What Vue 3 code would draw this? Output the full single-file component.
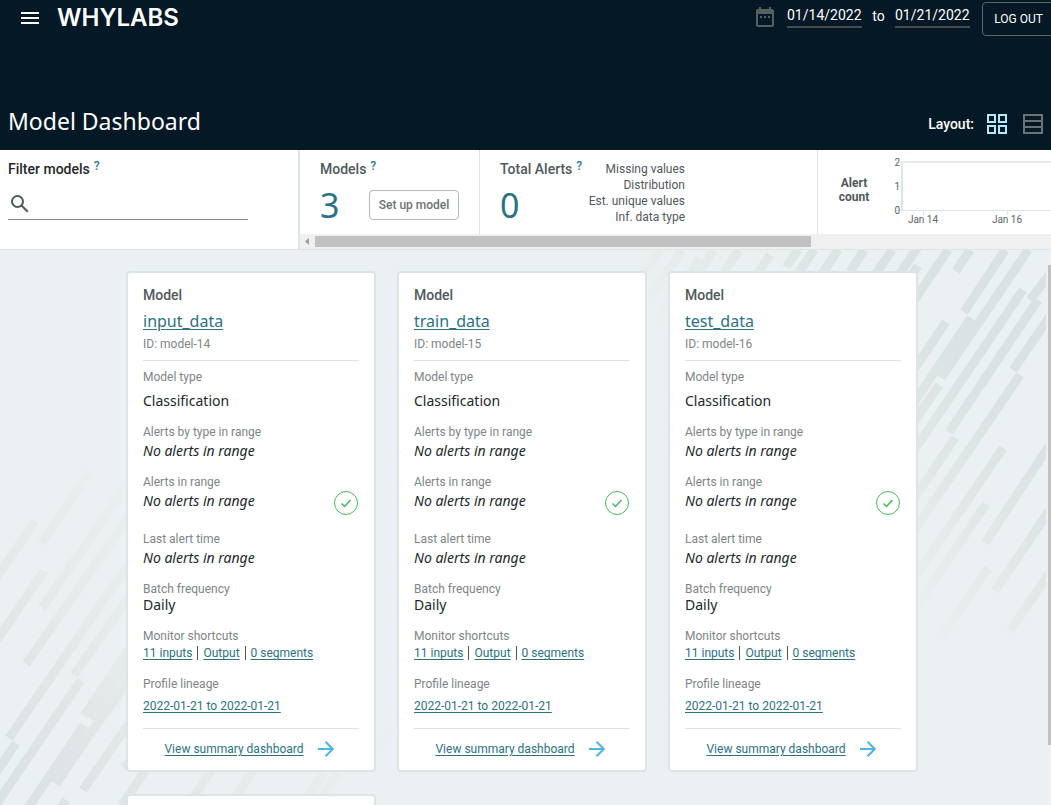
<script setup>
import { ref } from 'vue'

const layout = ref('grid')
const search = ref('')
const startDate = ref('01/14/2022')
const endDate = ref('01/21/2022')

const models = [
  { id: 'model-14', name: 'input_data' },
  { id: 'model-15', name: 'train_data' },
  { id: 'model-16', name: 'test_data' },
]

const alertTypes = ['Missing values', 'Distribution', 'Est. unique values', 'Inf. data type']

// Diagonal background bars: x1 y1 x2 y2 of each centre line.
const bars = [
  [948, 0, 905, 64], [970, 0, 956, 21], [1005, 0, 964, 62], [1028, 0, 941, 128], [971, 68, 900, 173],
  [1023, 40, 860, 280], [1053, 20, 1030, 50], [1038, 50, 949, 182], [1053, 62, 1013, 120],
  [1020, 125, 860, 360], [946, 72, 890, 155], [939, 135, 860, 251], [955, 188, 860, 328],
  [1003, 198, 860, 408], [1053, 190, 985, 293], [986, 254, 880, 410], [1053, 255, 995, 341],
  [988, 318, 940, 389], [1053, 318, 1010, 381],
  [918, 16, 905, 35], [892, 0, 870, 32], [864, 0, 850, 22], [943, -40, 875, 60],
  [838, 0, 810, 41], [814, 0, 790, 35], [798, 0, 786, 17], [770, 5, 740, 50], [739, 0, 640, 145],
  [714, 0, 640, 108], [700, 8, 640, 96], [682, 0, 640, 62], [660, 0, 640, 30],
  [35, 271, -7, 333], [44, 321, -7, 396], [90, 222, 42, 293], [130, 230, 42, 358], [130, 265, 26, 414],
  [130, 312, 9, 488], [130, 345, 74, 425], [81, 430, -5, 556], [16, 493, -7, 527],
  [136, 389, 84, 466], [136, 402, 91, 469], [130, 429, 92, 481], [84, 475, 28, 558], [92, 481, 56, 534],
  [85, 478, 50, 530], [130, 472, 83, 540], [136, 506, 124, 518], [66, 550, 60, 559], [135, 542, 122, 560],
  [149, 515, 122, 555], [215, 515, 188, 555], [257, 515, 230, 555], [324, 523, 303, 555], [338, 523, 317, 555],
  [385, 400, 365, 430], [396, 470, 375, 501],
]
</script>

<template>
  <div class="page">
    <header class="header">
      <div class="topbar">
        <button class="icon-btn menu" type="button" aria-label="Open menu">
          <svg width="18" height="12" viewBox="0 0 18 12"><path d="M0 1h18M0 6h18M0 11h18" stroke="#fff" stroke-width="2" /></svg>
        </button>
        <a class="logo" href="#">WHYLABS</a>
        <div class="dates">
          <svg class="calendar" width="18" height="20" viewBox="0 0 18 20">
            <path fill="#55605f" fill-rule="evenodd" d="M3 0h2v2h8V0h2v2h1a2 2 0 0 1 2 2v14a2 2 0 0 1-2 2H2a2 2 0 0 1-2-2V4a2 2 0 0 1 2-2h1zM2 7v11h14V7zM4 9h2v2H4zm4 0h2v2H8zm4 0h2v2h-2z" />
          </svg>
          <input v-model="startDate" class="date" type="text" aria-label="Start date" />
          <span class="to">to</span>
          <input v-model="endDate" class="date" type="text" aria-label="End date" />
        </div>
        <button class="logout" type="button">LOG OUT</button>
      </div>
      <div class="titlebar">
        <h1>Model Dashboard</h1>
        <div class="layout">
          <span class="layout-label">Layout:</span>
          <button class="icon-btn" :class="{ on: layout === 'grid' }" type="button" aria-label="Card layout" @click="layout = 'grid'">
            <svg width="20" height="20" viewBox="0 0 20 20" fill="none" stroke="currentColor" stroke-width="2">
              <path d="M1 1h7v7H1zM12 1h7v7h-7zM1 12h7v7H1zM12 12h7v7h-7z" />
            </svg>
          </button>
          <button class="icon-btn" :class="{ on: layout === 'list' }" type="button" aria-label="Table layout" @click="layout = 'list'">
            <svg width="20" height="20" viewBox="0 0 20 20" fill="none" stroke="currentColor" stroke-width="2">
              <path d="M1 1h18v18H1zM1 7h18M1 13h18" />
            </svg>
          </button>
        </div>
      </div>
    </header>

    <section class="strip">
      <div class="filter">
        <label class="heading dark" for="filter">Filter models<sup>?</sup></label>
        <div class="search">
          <svg width="18" height="18" viewBox="0 0 18 18" fill="none" stroke="#4f595b" stroke-width="2">
            <circle cx="6.5" cy="6.5" r="5.5" /><path d="M10.5 10.5l6.3 6.3" />
          </svg>
          <input id="filter" v-model="search" type="text" />
        </div>
      </div>
      <div class="summary">
        <div class="stats">
          <div class="stat count">
            <div class="heading">Models<sup>?</sup></div>
            <div class="row"><span class="big">3</span><button class="setup" type="button">Set up model</button></div>
          </div>
          <div class="stat alerts">
            <div>
              <div class="heading">Total Alerts<sup>?</sup></div>
              <div class="row"><span class="big">0</span></div>
            </div>
            <ul class="types"><li v-for="t in alertTypes" :key="t">{{ t }}</li></ul>
          </div>
          <div class="stat chart">
            <div class="chart-label">Alert count</div>
            <svg class="plot" height="84" aria-label="Alert count by day">
              <g stroke="#dbe5e7" stroke-width="1">
                <path d="M14 12.5h6M14 36.5h6M14 60.5h6M41.500 60v5M125.500 60v5" />
                <path d="M20 12v49" stroke-width="2" />
                <line x1="20" x2="100%" y1="12" y2="12" stroke="#e6edef" stroke-width="2" />
                <line x1="20" x2="100%" y1="60.5" y2="60.5" />
              </g>
              <g font-size="10" fill="#5b6567">
                <g text-anchor="end"><text x="18" y="16">2</text><text x="18" y="40">1</text><text x="18" y="64">0</text></g>
                <g text-anchor="middle"><text x="41" y="73">Jan 14</text><text x="125" y="73">Jan 16</text></g>
              </g>
            </svg>
          </div>
        </div>
        <div class="hscroll">
          <svg width="15" height="15" viewBox="0 0 15 15"><path d="M9 4v7L5 7.500z" fill="#a0a0a0" /></svg>
          <div class="hthumb"></div>
        </div>
      </div>
    </section>

    <main class="main">
      <svg class="bars" width="1046" height="560" viewBox="0 0 1046 560" aria-hidden="true">
        <defs>
          <linearGradient id="fade" gradientUnits="userSpaceOnUse" x1="1046" y1="0" x2="183" y2="759">
            <stop offset="0" stop-color="#d9e1e2" />
            <stop offset="0.12" stop-color="#dae2e3" />
            <stop offset="0.2" stop-color="#e2e8e8" />
            <stop offset="0.3" stop-color="#ebf0f2" />
            <stop offset="0.7" stop-color="#ebf0f2" />
            <stop offset="0.84" stop-color="#e5eaea" />
            <stop offset="0.93" stop-color="#dfe5e6" />
            <stop offset="1" stop-color="#d9e1e2" />
          </linearGradient>
        </defs>
        <path v-for="(b, i) in bars" :key="i" :d="`M${b[0]} ${b[1]}L${b[2]} ${b[3]}`" stroke="url(#fade)" stroke-width="9" />
      </svg>
      <div class="cards">
        <article v-for="m in models" :key="m.id" class="card">
          <h2>Model</h2>
          <a class="name" href="#">{{ m.name }}</a>
          <div class="small id">ID: {{ m.id }}</div>
          <hr />
          <div class="field loose"><div class="small">Model type</div><div class="value">Classification</div></div>
          <div class="field"><div class="small">Alerts by type in range</div><div class="value none">No alerts in range</div></div>
          <div class="field status">
            <div><div class="small">Alerts in range</div><div class="value none">No alerts in range</div></div>
            <svg width="24" height="24" viewBox="0 0 24 24" fill="none" stroke="#44b95c">
              <circle cx="12" cy="12" r="11.500" /><path d="M7.500 12.500l3 3 6-6.500" stroke-width="1.500" />
            </svg>
          </div>
          <div class="field"><div class="small">Last alert time</div><div class="value none">No alerts in range</div></div>
          <div class="field tight"><div class="small">Batch frequency</div><div class="value">Daily</div></div>
          <div class="field shortcuts">
            <div class="small">Monitor shortcuts</div>
            <div class="links"><a href="#">11 inputs</a><i></i><a href="#">Output</a><i></i><a href="#">0 segments</a></div>
          </div>
          <div class="field loose"><div class="small">Profile lineage</div><div class="links"><a href="#">2022-01-21 to 2022-01-21</a></div></div>
          <hr />
          <div class="view">
            <a href="#">View summary dashboard</a>
            <svg width="16" height="16" viewBox="0 0 16 16" fill="none" stroke="#4db6e6" stroke-width="2"><path d="M0 8h15M7.500 0.700L14.800 8l-7.300 7.300" /></svg>
          </div>
        </article>
        <article class="card"></article>
      </div>
      <div class="vscroll"><div class="vthumb"></div></div>
    </main>
  </div>
</template>

<style>
body { margin: 0; }
</style>

<style scoped>
.page { box-sizing: border-box; height: 100vh; display: flex; flex-direction: column; overflow: hidden; font-family: Roboto, "Noto Sans", sans-serif; font-size: 12px; color: #4f595b; }
.page *, .page *::before { box-sizing: border-box; }
button, input { font-family: inherit; }
a { color: #2b7283; text-decoration: underline; text-underline-offset: 2px; }
.icon-btn { display: flex; padding: 0; border: 0; background: none; color: #6b7375; cursor: pointer; }
.icon-btn.on { color: #aeeaf7; }

.header { flex: none; background: #041826; color: #fff; display: flex; flex-direction: column; justify-content: space-between; height: 150px; }
.topbar { display: flex; align-items: center; height: 36px; padding-left: 21px; }
.logo { margin-left: 18px; color: #fff; text-decoration: none; font: 600 24px/36px Inter, sans-serif; }
.dates { display: flex; align-items: flex-start; margin-left: auto; height: 36px; padding-top: 5px; }
.calendar { margin: 2px 13px 0 0; }
.date { width: 75px; height: 23px; padding: 0 0 1px; border: 0; border-bottom: 2px solid #444c4e; background: none; color: #fff; font-size: 14px; line-height: 20px; outline: 0; }
.to { width: 33px; text-align: center; font-size: 14px; line-height: 22px; }
.logout { align-self: flex-start; flex: none; width: 76px; height: 34px; margin: 2px -7px 0 12px; padding: 0 3px 0 0; border: 1px solid #5b6466; border-radius: 4px; background: none; color: #fff; font-size: 12px; }
.titlebar { display: flex; align-items: center; justify-content: space-between; padding: 0 8px; height: 52px; }
h1 { margin: 0; padding-bottom: 6px; font-family: "Noto Sans", sans-serif; font-size: 23px; line-height: 32px; font-weight: 400; }
.layout { display: flex; align-items: center; gap: 16px; }
.layout-label { margin-right: -3px; font-size: 14px; font-weight: 500; }

.strip { flex: none; display: flex; height: 100px; border-bottom: 1px solid #dbe5e7; background: #fff; }
.filter { flex: none; width: 300px; padding: 9px 8px; border-right: 2px solid #dbe5e7; }
.heading { display: block; font-size: 14px; line-height: 20px; font-weight: 500; white-space: nowrap; }
.heading.dark { color: #20292b; }
sup { margin-left: 4px; color: #2b7a8c; font-size: 12px; line-height: 0; vertical-align: 4px; }
.search { display: flex; align-items: center; width: 240px; height: 32px; margin-top: 9px; padding-left: 3px; border-bottom: 1px solid #80898b; }
.search input { flex: 1; min-width: 0; border: 0; outline: 0; background: none; font-size: 14px; }
.summary { flex: 1; min-width: 0; display: flex; flex-direction: column; }
.stats { flex: 1; display: flex; min-height: 0; }
.stat { padding: 9px 20px 0; border-right: 1px solid #dbe5e7; }
.count { flex: none; width: 180px; }
.row { display: flex; align-items: center; justify-content: space-between; height: 44px; margin-top: 4px; }
.big { color: #2b7283; font-family: "Noto Sans", sans-serif; font-size: 34px; line-height: 40px; }
.setup { height: 30px; width: 90px; padding: 0; border: 1px solid #b3b9ba; border-radius: 4px; background: #fff; color: #6b7375; font-size: 12px; font-weight: 500; }
.alerts { flex: none; display: flex; justify-content: space-between; width: 338px; padding-right: 132px; }
.types { margin: 2px 0 0 -10px; padding: 0; list-style: none; text-align: right; line-height: 16px; white-space: nowrap; }
.chart { flex: 1; min-width: 0; display: flex; padding: 0; border: 0; }
.chart-label { flex: none; width: 72px; padding: 26px 16px 0; text-align: center; font-weight: 700; line-height: 14px; }
.plot { flex: 1; min-width: 0; margin-left: -8px; }
.hscroll { display: flex; align-items: center; height: 15px; background: #f0f0f0; }
.hthumb { width: 66%; height: 11px; background: #c1c1c1; }

.main { position: relative; flex: 1; min-height: 0; display: flex; overflow: hidden; background: #ebf0f2; }
.bars { position: absolute; top: 0; left: 0; }
.cards { position: relative; flex: 1; display: grid; grid-template-columns: repeat(auto-fit, 250px); justify-content: center; align-content: start; gap: 22px 21px; padding: 21px 2px 0 0; }
.vscroll { position: relative; flex: none; width: 5px; padding: 15px 0 0 2px; background: #f0f0f0; }
.vthumb { height: 480px; background: #c1c1c1; }
.card { padding: 12px 15px 13px; border: 2px solid #dbe5e7; border-radius: 4px; background: #fff; }
h2 { margin: 0; font-size: 14px; line-height: 20px; font-weight: 500; }
.name { display: block; width: fit-content; margin-top: 4px; font-family: "Noto Sans", sans-serif; font-size: 16px; line-height: 24px; }
.small { font-size: 12px; line-height: 14px; color: #7d8587; }
.id { margin-top: 4px; }
hr { height: 1px; margin: 9px 0; border: 0; background: #dbe5e7; }
.field { display: flex; flex-direction: column; gap: 3px; margin-bottom: 15px; }
.field.loose { gap: 8px; }
.field.tight { gap: 0; }
.field.shortcuts { margin-bottom: 17px; }
.field.status { flex-direction: row; justify-content: space-between; align-items: flex-end; margin-bottom: 17px; }
.status .value { margin: 3px 0 5px; }
.status svg { margin-right: 1px; }
.value { font-family: "Noto Sans", sans-serif; font-size: 14px; line-height: 18px; color: #20292b; }
.none { font-style: italic; }
.links { display: flex; align-items: center; line-height: 14px; }
.links i { width: 1px; height: 14px; margin: 0 5px; background: #4f595b; }
.view { display: flex; align-items: center; justify-content: center; gap: 14px; margin-top: 12px; line-height: 16px; padding-right: 4px; }
</style>
